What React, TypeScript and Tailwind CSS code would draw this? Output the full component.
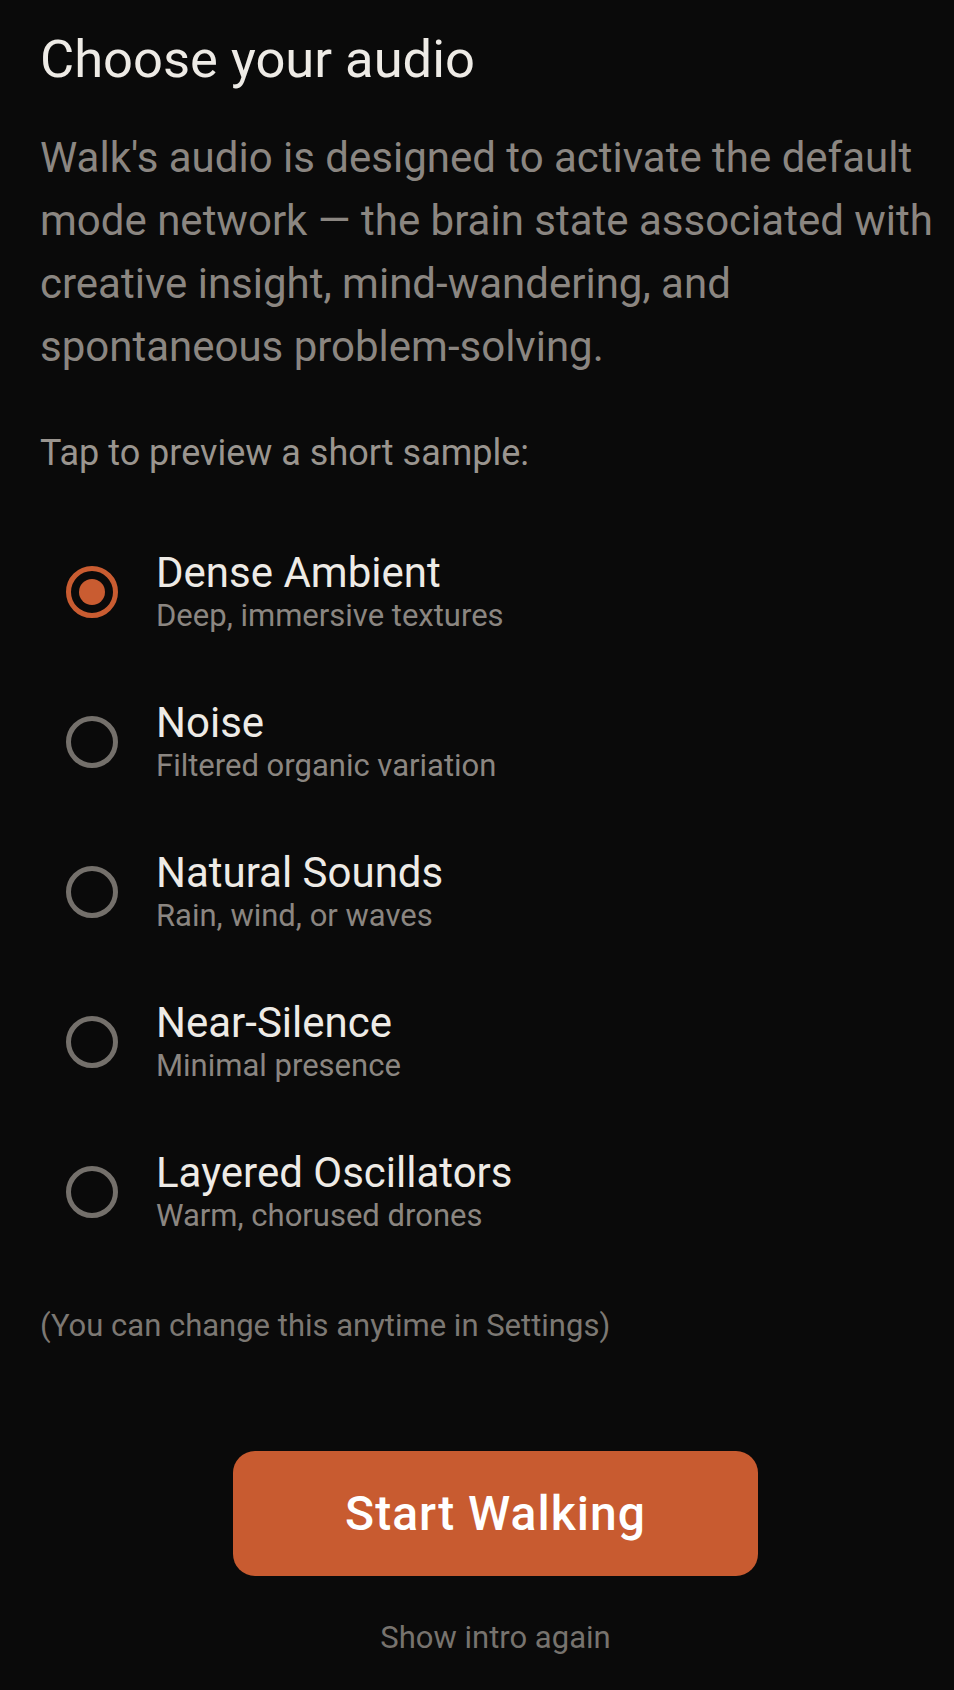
import React, { useState } from 'react';

const options = [
  { id: 'dense', title: 'Dense Ambient', subtitle: 'Deep, immersive textures' },
  { id: 'noise', title: 'Noise', subtitle: 'Filtered organic variation' },
  { id: 'natural', title: 'Natural Sounds', subtitle: 'Rain, wind, or waves' },
  { id: 'silence', title: 'Near-Silence', subtitle: 'Minimal presence' },
  { id: 'osc', title: 'Layered Oscillators', subtitle: 'Warm, chorused drones' },
];

function Radio({ checked }: { checked: boolean }) {
  return (
    <div
      className={`flex h-[52px] w-[52px] shrink-0 items-center justify-center rounded-full border-[5px] ${
        checked ? 'border-[#c95c31]' : 'border-[#74706b]'
      }`}
    >
      {checked && <div className="h-[26px] w-[26px] rounded-full bg-[#c95c31]" />}
    </div>
  );
}

export default function App() {
  const [selected, setSelected] = useState('dense');

  return (
    <div className="min-h-[1690px] bg-[#0a0a0a] pl-[40px] pr-[3px] pt-[29px] font-['Roboto',_'Noto_Sans',_sans-serif]">
      <h1 className="text-[52.5px] leading-[60px] font-normal text-[#eeebe6]">Choose your audio</h1>

      <p className="mt-[37px] text-[42px] leading-[63px] text-[#8b8681]">
        Walk's audio is designed to activate the default mode network — the brain state associated with
        creative insight, mind-wandering, and spontaneous problem-solving.
      </p>

      <p className="mt-[51px] text-[36px] leading-[48px] text-[#9a958f]">Tap to preview a short sample:</p>

      {/* audio options */}
      <div className="mt-[40px] flex flex-col">
        {options.map((opt) => (
          <button
            key={opt.id}
            onClick={() => setSelected(opt.id)}
            className="flex items-center gap-[38px] py-[32px] pl-[26px] text-left"
          >
            <Radio checked={selected === opt.id} />
            <div className="flex flex-col">
              <span className="text-[42px] leading-[48px] text-[#eeebe6]">{opt.title}</span>
              <span className="text-[31px] leading-[38px] text-[#8b8681]">{opt.subtitle}</span>
            </div>
          </button>
        ))}
      </div>

      <p className="mt-[40px] text-[31px] leading-[38px] text-[#7c7873]">(You can change this anytime in Settings)</p>

      <div className="mt-[106px] flex justify-center">
        <button className="flex h-[125px] w-[525px] items-center justify-center rounded-[22px] bg-[#c85b30] text-[48px] font-medium tracking-[1px] text-white">
          Start Walking
        </button>
      </div>

      <div className="mt-[43px] flex justify-center">
        <button className="text-[31px] leading-[38px] text-[#77736e]">Show intro again</button>
      </div>
    </div>
  );
}
